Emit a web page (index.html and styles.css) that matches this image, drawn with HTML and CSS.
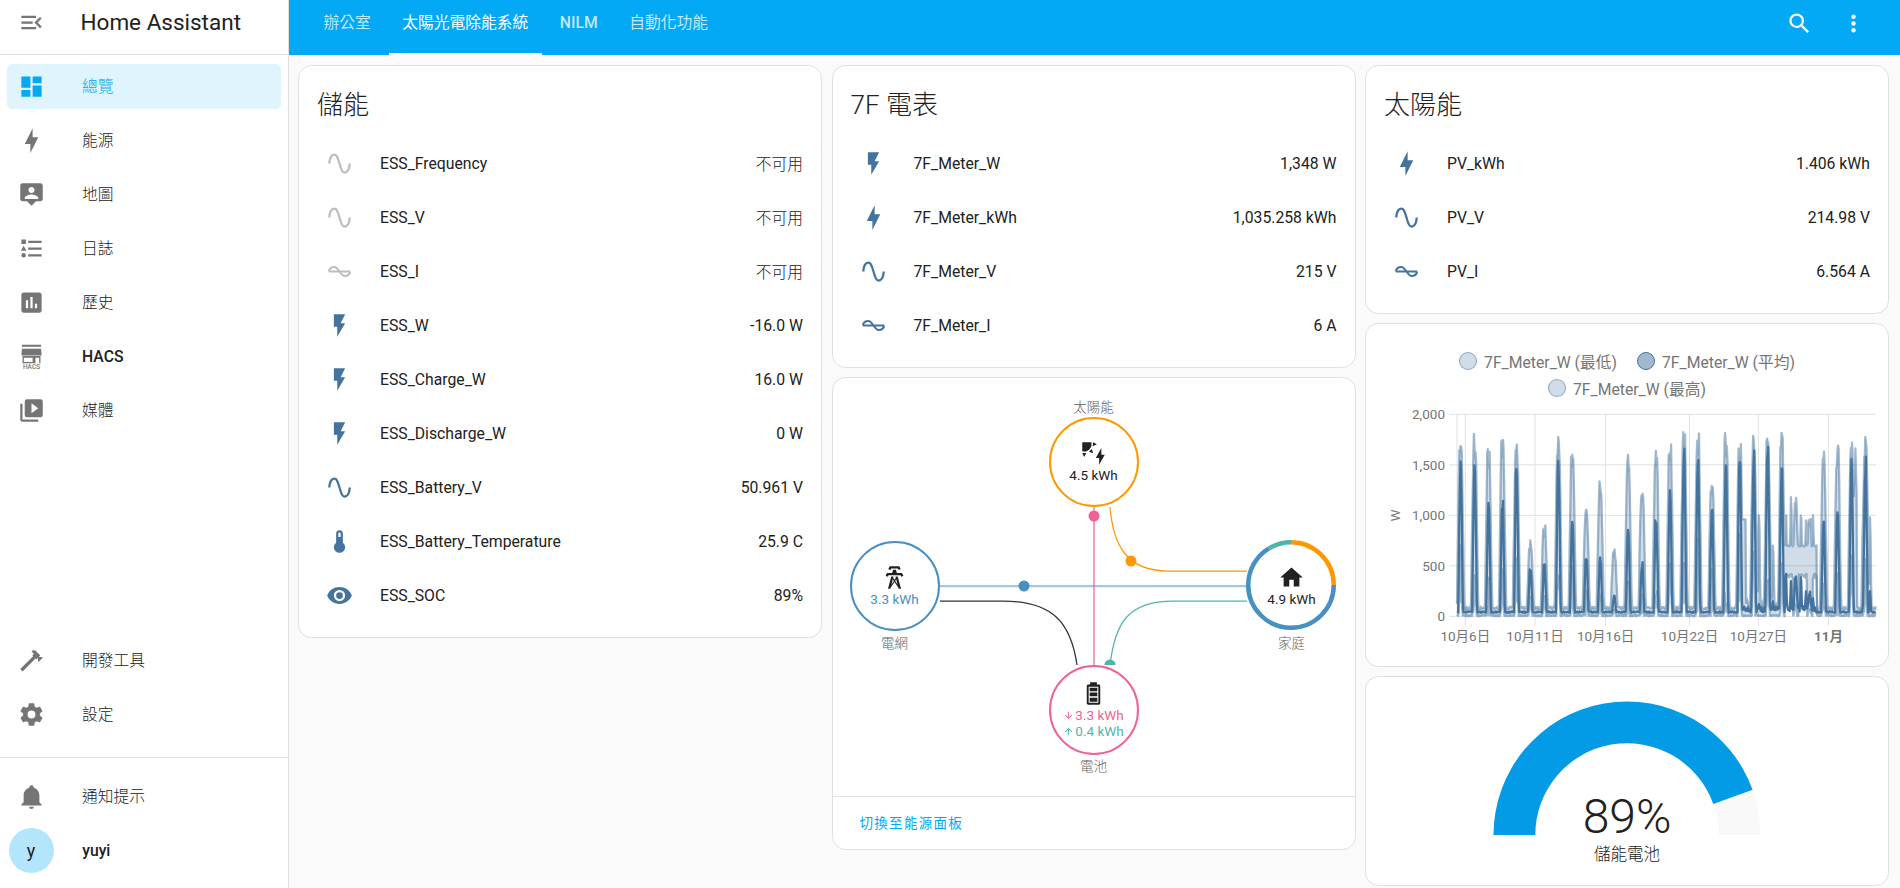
FILE: index.html
```html
<!DOCTYPE html>
<html lang="zh-Hant">
<head>
    <meta charset="UTF-8">
    <meta name="viewport" content="width=device-width, initial-scale=1.0">
    <title>Home Assistant</title>
    <link rel="stylesheet" href="styles.css">
</head>
<body>
    <!-- Shared icons -->
    <svg class="sprite" xmlns="http://www.w3.org/2000/svg">
        <symbol id="i-flash" viewBox="0 0 24 24"><path d="M7,2V13H10V22L17,10H13L17,2H7Z"/></symbol>
        <symbol id="i-bolt" viewBox="0 0 24 24"><path d="M11 15H6L13 1V9H18L11 23V15Z"/></symbol>
        <symbol id="i-sine" viewBox="0 0 24 24"><path d="M16.5,21C13.5,21 12.31,16.76 11.05,12.28C10.14,9.04 9,5 7.5,5C4.11,5 4,11.93 4,12H2C2,11.63 2.06,3 7.5,3C10.5,3 11.71,7.25 12.97,11.74C13.83,14.8 15,19 16.5,19C19.94,19 20.03,12.07 20.03,12H22.03C22.03,12.37 21.97,21 16.5,21Z"/></symbol>
        <symbol id="i-ac" viewBox="0 0 24 24"><path fill="none" stroke="currentColor" stroke-width="1.8" d="M2.5 12C3 9 5.5 8 7.5 8C11 8 13 16 16.5 16C18.5 16 21 15 21.5 12M2.5 12H21.5"/></symbol>
        <symbol id="i-thermo" viewBox="0 0 24 24"><path d="M15 13V5A3 3 0 0 0 9 5V13A5 5 0 1 0 15 13M12 4A1 1 0 0 1 13 5V8H11V5A1 1 0 0 1 12 4Z"/></symbol>
        <symbol id="i-eye" viewBox="0 0 24 24"><path d="M12,9A3,3 0 0,0 9,12A3,3 0 0,0 12,15A3,3 0 0,0 15,12A3,3 0 0,0 12,9M12,17A5,5 0 0,1 7,12A5,5 0 0,1 12,7A5,5 0 0,1 17,12A5,5 0 0,1 12,17M12,4.5C7,4.5 2.73,7.61 1,12C2.73,16.39 7,19.5 12,19.5C17,19.5 21.27,16.39 23,12C21.27,7.61 17,4.5 12,4.5Z"/></symbol>
        <symbol id="i-arrow-down" viewBox="0 0 24 24"><path d="M11,4H13V16L18.5,10.5L19.92,11.92L12,19.84L4.08,11.92L5.5,10.5L11,16V4Z"/></symbol>
        <symbol id="i-arrow-up" viewBox="0 0 24 24"><path d="M13,20H11V8L5.5,13.5L4.08,12.08L12,4.16L19.92,12.08L18.5,13.5L13,8V20Z"/></symbol>
    </svg>

    <aside class="sidebar">
        <div class="sidebar-head">
            <svg class="icon" viewBox="0 0 24 24"><path d="M21,15.61L19.59,17L14.58,12L19.59,7L21,8.39L17.44,12L21,15.61M3,6H16V8H3V6M3,13V11H13V13H3M3,18V16H16V18H3Z"/></svg>
            <span class="brand">Home Assistant</span>
        </div>

        <nav class="nav">
            <a class="nav-item active">
                <svg class="icon" viewBox="0 0 24 24"><path d="M13,3V9H21V3M13,21H21V11H13M3,21H11V15H3M3,13H11V3H3V13Z"/></svg>
                <span class="nav-label">總覽</span>
            </a>
            <a class="nav-item">
                <svg class="icon" viewBox="0 0 24 24"><path d="M11 15H6L13 1V9H18L11 23V15Z"/></svg>
                <span class="nav-label">能源</span>
            </a>
            <a class="nav-item">
                <svg class="icon" viewBox="0 0 24 24"><path d="M20 2H4C2.9 2 2 2.9 2 4V16C2 17.1 2.9 18 4 18H8L12 22L16 18H20C21.1 18 22 17.1 22 16V4C22 2.9 21.1 2 20 2M12 5.3C13.5 5.3 14.7 6.5 14.7 8C14.7 9.5 13.5 10.7 12 10.7C10.5 10.7 9.3 9.5 9.3 8C9.3 6.5 10.5 5.3 12 5.3M18 16H6V15.1C6 13.1 10 12 12 12S18 13.1 18 15.1V16Z"/></svg>
                <span class="nav-label">地圖</span>
            </a>
            <a class="nav-item">
                <svg class="icon" viewBox="0 0 24 24"><path d="M5,9.5L7.5,14H2.5L5,9.5M3,4H7V8H3V4M5,20A2,2 0 0,0 7,18A2,2 0 0,0 5,16A2,2 0 0,0 3,18A2,2 0 0,0 5,20M9,5V7H21V5H9M9,19H21V17H9V19M9,13H21V11H9V13Z"/></svg>
                <span class="nav-label">日誌</span>
            </a>
            <a class="nav-item">
                <svg class="icon" viewBox="0 0 24 24"><path d="M19 3H5C3.9 3 3 3.9 3 5V19C3 20.1 3.9 21 5 21H19C20.1 21 21 20.1 21 19V5C21 3.9 20.1 3 19 3M9 17H7V10H9V17M13 17H11V7H13V17M17 17H15V13H17V17Z"/></svg>
                <span class="nav-label">歷史</span>
            </a>
            <a class="nav-item">
                <svg class="icon" viewBox="0 0 24 24">
                    <path d="M3.5 1.6H20.5V3.4H3.5ZM3.5 5H20.5L21 11H3Z"/>
                    <path fill-rule="evenodd" d="M4 11.6H20V18H4ZM5.2 13V16.8H13V13ZM15.5 13V18H18.8V13Z"/>
                    <text class="hacs-mark" x="12" y="23.4" text-anchor="middle">HACS</text>
                </svg>
                <span class="strong">HACS</span>
            </a>
            <a class="nav-item">
                <svg class="icon" viewBox="0 0 24 24"><path d="M4,6H2V20A2,2 0 0,0 4,22H18V20H4V6M20,2H8A2,2 0 0,0 6,4V16A2,2 0 0,0 8,18H20A2,2 0 0,0 22,16V4A2,2 0 0,0 20,2M12,14.5V5.5L18,10L12,14.5Z"/></svg>
                <span class="nav-label">媒體</span>
            </a>
        </nav>

        <div class="nav nav-tools">
            <a class="nav-item">
                <svg class="icon" viewBox="0 0 24 24"><path d="M2 19.63L13.43 8.2L12.72 7.5L14.14 6.07L12 3.89C13.2 2.7 15.09 2.7 16.27 3.89L19.87 7.5L18.45 8.91H21.29L22 9.62L18.45 13.21L17.74 12.5V9.62L16.27 11.04L15.56 10.33L4.13 21.76L2 19.63Z"/></svg>
                <span class="nav-label">開發工具</span>
            </a>
            <a class="nav-item">
                <svg class="icon" viewBox="0 0 24 24"><path d="M12,15.5A3.5,3.5 0 0,1 8.5,12A3.5,3.5 0 0,1 12,8.5A3.5,3.5 0 0,1 15.5,12A3.5,3.5 0 0,1 12,15.5M19.43,12.97C19.47,12.65 19.5,12.33 19.5,12C19.5,11.67 19.47,11.34 19.43,11L21.54,9.37C21.73,9.22 21.78,8.95 21.66,8.73L19.66,5.27C19.54,5.05 19.27,4.96 19.05,5.05L16.56,6.05C16.04,5.66 15.5,5.32 14.87,5.07L14.5,2.42C14.46,2.18 14.25,2 14,2H10C9.75,2 9.54,2.18 9.5,2.42L9.13,5.07C8.5,5.32 7.96,5.66 7.44,6.05L4.95,5.05C4.73,4.96 4.46,5.05 4.34,5.27L2.34,8.73C2.21,8.95 2.27,9.22 2.46,9.37L4.57,11C4.53,11.34 4.5,11.67 4.5,12C4.5,12.33 4.53,12.65 4.57,12.97L2.46,14.63C2.27,14.78 2.21,15.05 2.34,15.27L4.34,18.73C4.46,18.95 4.73,19.03 4.95,18.95L7.44,17.94C7.96,18.34 8.5,18.68 9.13,18.93L9.5,21.58C9.54,21.82 9.75,22 10,22H14C14.25,22 14.46,21.82 14.5,21.58L14.87,18.93C15.5,18.67 16.04,18.34 16.56,17.94L19.05,18.95C19.27,19.03 19.54,18.95 19.66,18.73L21.66,15.27C21.78,15.05 21.73,14.78 21.54,14.63L19.43,12.97Z"/></svg>
                <span class="nav-label">設定</span>
            </a>
        </div>

        <div class="nav nav-user">
            <a class="nav-item">
                <svg class="icon" viewBox="0 0 24 24"><path d="M21,19V20H3V19L5,17V11C5,7.9 7.03,5.17 10,4.29C10,4.19 10,4.1 10,4A2,2 0 0,1 12,2A2,2 0 0,1 14,4C14,4.1 14,4.19 14,4.29C16.97,5.17 19,7.9 19,11V17L21,19M14,21A2,2 0 0,1 12,23A2,2 0 0,1 10,21"/></svg>
                <span class="nav-label">通知提示</span>
            </a>
            <a class="nav-item user-item">
                <span class="avatar">y</span>
                <span class="strong">yuyi</span>
            </a>
        </div>
    </aside>

    <div class="main">
        <header class="topbar">
            <div class="tabs">
                <a class="tab">辦公室</a>
                <a class="tab active">太陽光電除能系統</a>
                <a class="tab strong">NILM</a>
                <a class="tab">自動化功能</a>
            </div>
            <div class="actions">
                <svg class="icon" viewBox="0 0 24 24"><path d="M9.5,3A6.5,6.5 0 0,1 16,9.5C16,11.11 15.41,12.59 14.44,13.73L14.71,14H15.5L20.5,19L19,20.5L14,15.5V14.71L13.73,14.44C12.59,15.41 11.11,16 9.5,16A6.5,6.5 0 0,1 3,9.5A6.5,6.5 0 0,1 9.5,3M9.5,5C7,5 5,7 5,9.5C5,12 7,14 9.5,14C12,14 14,12 14,9.5C14,7 12,5 9.5,5Z"/></svg>
                <svg class="icon" viewBox="0 0 24 24"><path d="M12,16A2,2 0 0,1 14,18A2,2 0 0,1 12,20A2,2 0 0,1 10,18A2,2 0 0,1 12,16M12,10A2,2 0 0,1 14,12A2,2 0 0,1 12,14A2,2 0 0,1 10,12A2,2 0 0,1 12,10M12,4A2,2 0 0,1 14,6A2,2 0 0,1 12,8A2,2 0 0,1 10,6A2,2 0 0,1 12,4Z"/></svg>
            </div>
        </header>

        <div class="columns">
            <!-- Column 1 -->
            <div class="column">
                <section class="card entities">
                    <h2 class="card-title">儲能</h2>
                    <div class="row off"><svg class="icon"><use href="#i-sine"/></svg><span class="name">ESS_Frequency</span><span class="value light">不可用</span></div>
                    <div class="row off"><svg class="icon"><use href="#i-sine"/></svg><span class="name">ESS_V</span><span class="value light">不可用</span></div>
                    <div class="row off"><svg class="icon"><use href="#i-ac"/></svg><span class="name">ESS_I</span><span class="value light">不可用</span></div>
                    <div class="row"><svg class="icon"><use href="#i-flash"/></svg><span class="name">ESS_W</span><span class="value">-16.0 W</span></div>
                    <div class="row"><svg class="icon"><use href="#i-flash"/></svg><span class="name">ESS_Charge_W</span><span class="value">16.0 W</span></div>
                    <div class="row"><svg class="icon"><use href="#i-flash"/></svg><span class="name">ESS_Discharge_W</span><span class="value">0 W</span></div>
                    <div class="row"><svg class="icon"><use href="#i-sine"/></svg><span class="name">ESS_Battery_V</span><span class="value">50.961 V</span></div>
                    <div class="row"><svg class="icon"><use href="#i-thermo"/></svg><span class="name">ESS_Battery_Temperature</span><span class="value">25.9 C</span></div>
                    <div class="row"><svg class="icon"><use href="#i-eye"/></svg><span class="name">ESS_SOC</span><span class="value">89%</span></div>
                </section>
            </div>

            <!-- Column 2 -->
            <div class="column">
                <section class="card entities">
                    <h2 class="card-title">7F 電表</h2>
                    <div class="row"><svg class="icon"><use href="#i-flash"/></svg><span class="name">7F_Meter_W</span><span class="value">1,348 W</span></div>
                    <div class="row"><svg class="icon"><use href="#i-bolt"/></svg><span class="name">7F_Meter_kWh</span><span class="value">1,035.258 kWh</span></div>
                    <div class="row"><svg class="icon"><use href="#i-sine"/></svg><span class="name">7F_Meter_V</span><span class="value">215 V</span></div>
                    <div class="row"><svg class="icon"><use href="#i-ac"/></svg><span class="name">7F_Meter_I</span><span class="value">6 A</span></div>
                </section>

                <section class="card energy">
                    <div class="flow">
                        <svg class="flow-lines" viewBox="0 0 522 417">
                            <path class="line-grid" d="M107 208H414"/>
                            <path class="line-solar" d="M277 129C280 165 292 193 335 193H414"/>
                            <path class="line-import" d="M107 223H170C220 223 238 245 244 287"/>
                            <path class="line-charge" d="M414 223H340C295 223 282 245 277 287"/>
                            <path class="line-battery" d="M261 129V287"/>
                            <circle class="dot-grid" cx="191" cy="208" r="5.5"/>
                            <circle class="dot-battery" cx="261" cy="138" r="5.5"/>
                            <circle class="dot-solar" cx="298" cy="183" r="5.5"/>
                            <path class="dot-charge" d="M271.4 287A5.6 5.6 0 0 1 282.6 287Z"/>
                        </svg>

                        <span class="flow-label label-solar">太陽能</span>
                        <div class="node node-solar">
                            <svg class="icon" viewBox="0 0 24 24"><path d="M11.45,2V5.55L15,3.77L11.45,2M10.45,8L8,10.46L11.75,11.71L10.45,8M2,11.45L3.77,15L5.55,11.45H2M10,2H2V10C2.57,10.17 3.17,10.25 3.77,10.25C7.35,10.26 10.26,7.35 10.27,3.75C10.26,3.16 10.17,2.57 10,2M17,22V16H14L19,7V13H22L17,22Z"/></svg>
                            <span>4.5 kWh</span>
                        </div>

                        <div class="node node-grid">
                            <svg class="icon" viewBox="0 0 24 24"><path d="M8.28,5.45L6.5,4.55L7.76,2H16.23L17.5,4.55L15.72,5.44L15,4H9L8.28,5.45M18.62,8H14.09L13.3,5H10.7L9.91,8H5.38L4.1,10.55L5.89,11.44L6.62,10H17.38L18.1,11.44L19.89,10.55L18.62,8M17.77,22H15.7L15.46,21.1L12,15.9L8.53,21.1L8.3,22H6.23L9.12,11H11.19L10.83,12.35L12,14.1L13.16,12.35L12.81,11H14.88L17.77,22M11.4,15L10.5,13.65L9.32,18.13L11.4,15M14.68,18.12L13.5,13.64L12.6,15L14.68,18.12Z"/></svg>
                            <span class="grid-value">3.3 kWh</span>
                        </div>
                        <span class="flow-label label-grid">電網</span>

                        <div class="node node-home">
                            <svg class="home-ring" viewBox="0 0 90 90">
                                <circle class="ring-solar" cx="45" cy="45" r="42.75" pathLength="360" stroke-dasharray="90 270"/>
                                <circle class="ring-grid" cx="45" cy="45" r="42.75" pathLength="360" stroke-dasharray="239 121" stroke-dashoffset="-90"/>
                                <circle class="ring-battery" cx="45" cy="45" r="42.75" pathLength="360" stroke-dasharray="31 329" stroke-dashoffset="-329"/>
                            </svg>
                            <svg class="icon" viewBox="0 0 24 24"><path d="M10,20V14H14V20H19V12H22L12,3L2,12H5V20H10Z"/></svg>
                            <span>4.9 kWh</span>
                        </div>
                        <span class="flow-label label-home">家庭</span>

                        <div class="node node-battery">
                            <svg class="icon" viewBox="0 0 24 24">
                                <path d="M9 2H15V4H16.7C17.4 4 18 4.6 18 5.3V20.7C18 21.4 17.4 22 16.7 22H7.3C6.6 22 6 21.4 6 20.7V5.3C6 4.6 6.6 4 7.3 4H9Z"/>
                                <path class="battery-gaps" d="M7.7 6V20.3H16.3V6ZM8.6 6.9H15.4V9.9H8.6ZM8.6 11.2H15.4V14.4H8.6ZM8.6 15.7H15.4V19.4H8.6Z"/>
                            </svg>
                            <span class="battery-in"><svg class="arrow"><use href="#i-arrow-down"/></svg>3.3 kWh</span>
                            <span class="battery-out"><svg class="arrow"><use href="#i-arrow-up"/></svg>0.4 kWh</span>
                        </div>
                        <span class="flow-label label-battery">電池</span>
                    </div>
                    <div class="card-footer"><a class="footer-link">切換至能源面板</a></div>
                </section>
            </div>

            <!-- Column 3 -->
            <div class="column">
                <section class="card entities">
                    <h2 class="card-title">太陽能</h2>
                    <div class="row"><svg class="icon"><use href="#i-bolt"/></svg><span class="name">PV_kWh</span><span class="value">1.406 kWh</span></div>
                    <div class="row"><svg class="icon"><use href="#i-sine"/></svg><span class="name">PV_V</span><span class="value">214.98 V</span></div>
                    <div class="row"><svg class="icon"><use href="#i-ac"/></svg><span class="name">PV_I</span><span class="value">6.564 A</span></div>
                </section>

                <section class="card chart-card">
                    <div class="legend">
                        <span class="legend-item"><i class="swatch"></i>7F_Meter_W (最低)</span>
                        <span class="legend-item"><i class="swatch swatch-mean"></i>7F_Meter_W (平均)</span>
                        <span class="legend-item"><i class="swatch"></i>7F_Meter_W (最高)</span>
                    </div>
                    <svg id="chart" class="chart" viewBox="0 0 522 250"></svg>
                </section>

                <section class="card gauge-card">
                    <svg class="gauge" viewBox="0 0 270 136">
                        <path class="gauge-rest" d="M260.6 89.8A133.5 133.5 0 0 1 268.5 135H226.7A91.7 91.7 0 0 0 221.3 103.9Z"/>
                        <path class="gauge-fill" d="M1.5 135A133.5 133.5 0 0 1 260.6 89.8L221.3 103.9A91.7 91.7 0 0 0 43.3 135Z"/>
                        <text class="gauge-value" x="135" y="133.3" text-anchor="middle">89%</text>
                    </svg>
                    <div class="gauge-name">儲能電池</div>
                </section>
            </div>
        </div>
    </div>

    <script src="chart.js"></script>
</body>
</html>
```

FILE: styles.css
```css
* {
    box-sizing: border-box;
}

html, body {
    height: 100%;
}

body {
    display: flex;
    margin: 0;
    overflow: hidden;
    font-family: Roboto, "Noto Sans CJK TC", sans-serif;
    font-size: 15.75px;
    color: #212121;
    background-color: #fafafa;
}

a {
    color: inherit;
    text-decoration: none;
}

.sprite {
    position: absolute;
    width: 0;
    height: 0;
}

.icon {
    flex: none;
    width: 27px;
    height: 27px;
    fill: currentColor;
    overflow: visible;
}

.strong {
    font-weight: 500;
}

.light {
    font-weight: 300;
}

/* Sidebar */
.sidebar {
    flex: none;
    display: flex;
    flex-direction: column;
    width: 289px;
    height: 888px;
    background-color: #fff;
    border-right: 1px solid #e0e0e0;
}

.sidebar-head {
    display: flex;
    align-items: center;
    gap: 36px;
    height: 55px;
    padding: 0 0 10px 17.5px;
    border-bottom: 1px solid #e0e0e0;
    color: #757575;
}

.brand {
    font-size: 22.5px;
    color: #212121;
}

.nav {
    display: flex;
    flex-direction: column;
    gap: 9px;
    padding: 9px 7px 0;
}

.nav:first-of-type {
    flex: 1;
}

.nav-item {
    display: flex;
    align-items: center;
    gap: 37.5px;
    height: 45px;
    padding-left: 10.5px;
    border-radius: 5px;
    color: #212121;
}

.nav-item .icon {
    color: #757575;
}

.nav-label {
    padding-bottom: 2px;
    font-weight: 300;
}

.nav-item.active {
    color: #03a9f4;
    background-color: #e0f4fd;
}

.nav-item.active .icon {
    color: #03a9f4;
}

.nav-tools {
    padding-bottom: 20px;
}

.nav-user {
    padding: 16px 7px 15.5px;
    border-top: 1px solid #e0e0e0;
}

.user-item {
    gap: 28.7px;
    padding-left: 1.5px;
}

.avatar {
    flex: none;
    display: flex;
    align-items: center;
    justify-content: center;
    width: 45px;
    height: 45px;
    border-radius: 50%;
    font-size: 18px;
    background-color: #b3e5fc;
}

.hacs-mark {
    font-size: 5.8px;
    font-weight: 500;
}

/* Top bar */
.main {
    flex: 1;
    min-width: 0;
}

.topbar {
    display: flex;
    justify-content: space-between;
    height: 55px;
    color: #fff;
    background-color: #03a9f4;
}

.tabs {
    display: flex;
    gap: 4.5px;
    padding-left: 21px;
}

.tab {
    height: 55px;
    padding: 0 13.5px;
    line-height: 46px;
    color: rgba(255, 255, 255, 0.75);
}

.tab.active {
    color: #fff;
    border-bottom: 2px solid #fff;
}

.actions {
    display: flex;
    gap: 27.5px;
    padding: 9.5px 33px 0 0;
}

/* Card columns */
.columns {
    display: flex;
    gap: 9.5px;
    padding: 9.5px 11px 0 9px;
}

.column {
    flex: 1;
    min-width: 0;
    display: flex;
    flex-direction: column;
    gap: 9px;
}

.card {
    background-color: #fff;
    border: 1px solid #e0e0e0;
    border-radius: 13.5px;
}

.entities {
    padding-bottom: 14px;
}

.card-title {
    height: 71px;
    margin: 0;
    padding: 21px 0 0 18px;
    font-size: 26px;
    font-weight: 300;
    line-height: 36px;
}

.row {
    display: flex;
    align-items: center;
    height: 54px;
    padding: 0 18px;
    color: #44739e;
}

.row .icon {
    margin: 0 27px 0 9px;
}

.row.off {
    color: #bdbdbd;
}

.name {
    flex: 1;
    color: #212121;
}

.value {
    color: #212121;
}

/* Energy distribution */
.energy {
    height: 473.5px;
}

.flow {
    position: relative;
    height: 419.5px;
    border-bottom: 1px solid #e0e0e0;
}

.flow-lines {
    position: absolute;
    top: 0;
    left: 0;
    width: 522px;
    height: 417px;
    fill: none;
}

.line-grid {
    stroke: #488fc2;
    stroke-opacity: 0.5;
    stroke-width: 2.25;
}

.line-solar {
    stroke: #ff9800;
    stroke-width: 1.25;
}

.line-import {
    stroke: #333;
    stroke-width: 1.25;
}

.line-charge {
    stroke: #4db6ac;
    stroke-width: 1.25;
}

.line-battery {
    stroke: #f06292;
    stroke-width: 1.25;
}

.dot-grid {
    fill: #488fc2;
}

.dot-battery {
    fill: #f06292;
}

.dot-solar {
    fill: #ff9800;
}

.dot-charge {
    fill: #4db6ac;
}

.node {
    position: absolute;
    display: flex;
    flex-direction: column;
    align-items: center;
    justify-content: center;
    width: 90px;
    height: 90px;
    border: 2.25px solid;
    border-radius: 50%;
    font-size: 13.5px;
    line-height: 16px;
    background-color: #fff;
}

.node-solar {
    left: 216px;
    top: 39px;
    border-color: #ff9800;
}

.node-grid {
    left: 17px;
    top: 163px;
    border-color: #488fc2;
}

.node-home {
    left: 414px;
    top: 163px;
    border-color: transparent;
}

.node-battery {
    left: 216px;
    top: 287px;
    border-color: #f06292;
}

.grid-value {
    color: #488fc2;
}

.home-ring {
    position: absolute;
    top: -2.25px;
    left: -2.25px;
    width: 90px;
    height: 90px;
    fill: none;
    stroke-width: 4.5;
    transform: rotate(-90deg);
}

.ring-solar {
    stroke: #ff9800;
}

.ring-grid {
    stroke: #488fc2;
}

.ring-battery {
    stroke: #4db6ac;
}

.battery-gaps {
    fill: #fff;
    fill-rule: evenodd;
}

.battery-in,
.battery-out {
    display: flex;
    align-items: center;
}

.battery-in {
    color: #f06292;
}

.battery-out {
    color: #4db6ac;
}

.arrow {
    width: 11px;
    height: 13px;
    margin-right: 1px;
    fill: currentColor;
}

.flow-label {
    position: absolute;
    width: 60px;
    font-size: 13.5px;
    font-weight: 300;
    line-height: 16px;
    text-align: center;
    color: #616161;
}

.label-solar {
    left: 231px;
    top: 21px;
}

.label-grid {
    left: 32px;
    top: 257px;
}

.label-home {
    left: 429px;
    top: 257px;
}

.label-battery {
    left: 231px;
    top: 380px;
}

.card-footer {
    padding: 15px 0 0 27px;
}

.footer-link {
    font-size: 13.5px;
    letter-spacing: 1.3px;
    color: #03a9f4;
}

/* Chart */
.chart-card {
    height: 344px;
}

.legend {
    display: flex;
    flex-wrap: wrap;
    justify-content: center;
    gap: 0 20px;
    width: 400px;
    margin: 0 auto;
    padding-top: 24px;
    color: #757575;
}

.legend-item {
    display: flex;
    align-items: center;
    gap: 7px;
    height: 27.3px;
}

.swatch {
    width: 18px;
    height: 18px;
    border: 1px solid rgba(68, 115, 158, 0.5);
    border-radius: 50%;
    background-color: rgba(68, 115, 158, 0.25);
}

.swatch-mean {
    border-color: #44739e;
    background-color: rgba(68, 115, 158, 0.5);
}

.chart {
    display: block;
    width: 522px;
    height: 250px;
    overflow: visible;
}

.grid-line {
    stroke: #e0e0e0;
    stroke-width: 1;
}

.tick {
    font-size: 13.5px;
    fill: #757575;
}

.tick-major {
    font-weight: 700;
}

.band {
    fill: #44739e;
    fill-opacity: 0.25;
}

.series {
    fill: none;
    stroke: #44739e;
    stroke-linejoin: round;
    stroke-width: 2.25;
}

.series-edge {
    stroke-opacity: 0.5;
}

/* Gauge */
.gauge-card {
    height: 210px;
    padding-top: 23px;
    text-align: center;
}

.gauge {
    display: block;
    width: 270px;
    height: 136px;
    margin: 0 auto;
    overflow: visible;
}

.gauge-fill {
    fill: #039be5;
}

.gauge-rest {
    fill: #f9f9f9;
}

.gauge-value {
    font-size: 48px;
    font-weight: 300;
    fill: #212121;
}

.gauge-name {
    margin-top: 9px;
    font-size: 16.5px;
    font-weight: 300;
    line-height: 20px;
}
```

FILE: chart.js
```js
// Draws the 7F_Meter_W statistics chart (min / mean / max per hour)
const svg = document.getElementById('chart');
const NS = 'http://www.w3.org/2000/svg';

const PLOT = { left: 91, right: 510, top: 12.3, bottom: 214.3, max: 2000 };
const FIRST_PEAK = 94.6;
const DAY = 13.96;
const HOUR = DAY / 24;

// [max, mean] of the daily peak
const PEAKS = [
    [1800, 1600], [1820, 1600], [1680, 1190], [1790, 1210], [1740, 1600], [760, 520],
    [920, 600], [1850, 1620], [1650, 1000], [1070, 650], [1360, 600], [670, 220],
    [1620, 900], [1300, 540], [1700, 1080], [1770, 1340], [1840, 1740], [1850, 1630],
    [1370, 1070], [1830, 1550], [1800, 1700], [1800, 1720], [1810, 1760], [1820, 1560],
    [1180, 430], [990, 250], [1650, 970], [1700, 1100], [1720, 1580], [1810, 1600], [1280, 830]
];

// Short night-time spikes in the last weeks: [x, max, mean]
const SPIKES = [
    [375, 1000, 90], [393, 1000, 120], [403, 1000, 400], [407, 700, 150], [420, 1000, 430],
    [425, 1180, 350], [435, 1000, 400], [440, 950, 250], [447, 1000, 180], [484, 1000, 340],
    [497, 980, 120], [504, 980, 250]
];

let seed = 7;
const random = () => {
    seed = (seed * 16807) % 2147483647;
    return seed / 2147483647;
};

const yOf = (value) => PLOT.bottom - (value / PLOT.max) * (PLOT.bottom - PLOT.top);

const add = (name, attrs, text) => {
    const el = document.createElementNS(NS, name);
    Object.keys(attrs).forEach(key => el.setAttribute(key, attrs[key]));
    if (text) el.textContent = text;
    svg.appendChild(el);
    return el;
};

// How far x sits inside a peak: 1 on the flat top, 0 outside
const ramp = (distance, flat, edge) => {
    if (distance <= flat) return 1;
    if (distance >= edge) return 0;
    return (edge - distance) / (edge - flat);
};

const samples = [];
for (let x = PLOT.left; x <= PLOT.right; x += HOUR) {
    const day = Math.max(0, Math.min(PEAKS.length - 1, Math.round((x - FIRST_PEAK) / DAY)));
    const distance = Math.abs(x - (FIRST_PEAK + day * DAY));
    const [peakMax, peakMean] = PEAKS[day];
    const noisy = x > 375 && x < 450;

    let max = 70 + random() * 25;
    let mean = 35 + random() * 15;
    let min = random() * 12;
    if (noisy) {
        mean += random() * 60;
        max += random() * 100;
    }

    max = Math.max(max, peakMax * ramp(distance, 1.2, 3.8) * (0.86 + random() * 0.14));
    mean = Math.max(mean, peakMean * ramp(distance, 0.5, 2.4) * (0.85 + random() * 0.15));
    min = Math.max(min, peakMean * 0.5 * ramp(distance, 0.3, 2) * random());

    SPIKES.forEach(([spikeX, spikeMax, spikeMean]) => {
        const near = Math.abs(x - spikeX);
        max = Math.max(max, spikeMax * ramp(near, 0.3, 1.6));
        mean = Math.max(mean, spikeMean * ramp(near, 0.2, 1.2));
    });

    // Flat stretch at 700 W with a raised minimum
    if (x > 417 && x < 451) {
        max = Math.max(max, 690 + random() * 15);
        if (distance > 3) min = Math.max(min, 380 + random() * 40);
    }
    if (x > 372 && x < 380) max = Math.max(max, 960);
    // Dense maximum just before the last day
    if (x > 484 && x < 491) max = Math.max(max, 1000 + random() * 820);

    samples.push({ x, max, mean, min });
}

const line = (key) => samples.map(s => `${s.x.toFixed(1)},${yOf(s[key]).toFixed(1)}`).join(' ');

// Grid
[0, 500, 1000, 1500, 2000].forEach(value => {
    const y = yOf(value);
    add('line', { class: 'grid-line', x1: 83, x2: PLOT.right, y1: y, y2: y });
    add('text', { class: 'tick', x: 79, y: y + 5, 'text-anchor': 'end' }, value.toLocaleString('en-US'));
});
add('line', { class: 'grid-line', x1: PLOT.left, x2: PLOT.left, y1: PLOT.top, y2: PLOT.bottom });

[
    [99.3, '10月6日'], [169, '10月11日'], [239.6, '10月16日'],
    [323.5, '10月22日'], [392.4, '10月27日'], [462.4, '11月', true]
].forEach(([x, label, major]) => {
    add('line', { class: 'grid-line', x1: x, x2: x, y1: PLOT.top, y2: 223.7 });
    add('text', { class: major ? 'tick tick-major' : 'tick', x, y: 239, 'text-anchor': 'middle' }, label);
});

add('text', { class: 'tick', transform: 'translate(34 113.5) rotate(-90)', 'text-anchor': 'middle' }, 'W');

// Series
const reversed = samples.slice().reverse().map(s => `${s.x.toFixed(1)},${yOf(s.min).toFixed(1)}`).join(' ');
add('polygon', { class: 'band', points: `${line('max')} ${reversed}` });
add('polyline', { class: 'series series-edge', points: line('min') });
add('polyline', { class: 'series series-edge', points: line('max') });
add('polyline', { class: 'series', points: line('mean') });
```
